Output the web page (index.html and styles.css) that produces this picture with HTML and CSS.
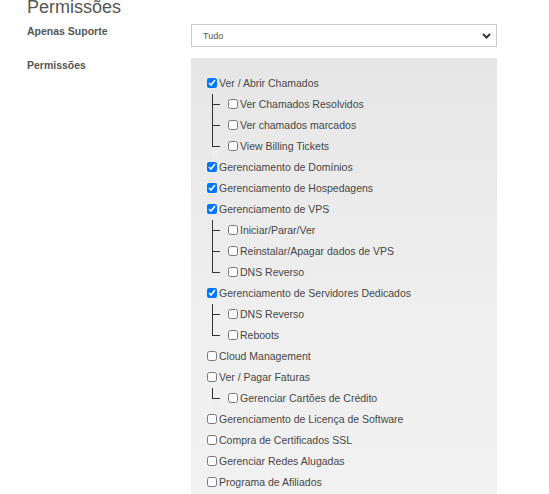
FILE: index.html
```html
<!DOCTYPE html>
<html lang="pt-BR">
<head>
<meta charset="utf-8">
<title>Permissões</title>
<link rel="stylesheet" href="styles.css">
</head>
<body>
<div class="page">
  <h1 class="title">Permissões</h1>

  <div class="form-row row-support">
    <label class="field-label" for="support">Apenas Suporte</label>
    <div class="select-wrap">
      <select id="support" class="select">
        <option>Tudo</option>
      </select>
      <svg class="chevron" width="9" height="6" viewBox="0 0 9 6" aria-hidden="true">
        <path d="M1 1 L4.5 4.5 L8 1" fill="none" stroke="#333" stroke-width="2"/>
      </svg>
    </div>
  </div>

  <div class="form-row row-perms">
    <div class="field-label perms-label">Permissões</div>
    <div class="perm-box">
      <ul class="tree">
        <li><label class="item"><input type="checkbox" checked> Ver / Abrir Chamados</label>
          <ul class="children">
            <li><label class="item"><input type="checkbox"> Ver Chamados Resolvidos</label></li>
            <li><label class="item"><input type="checkbox"> Ver chamados marcados</label></li>
            <li><label class="item"><input type="checkbox"> View Billing Tickets</label></li>
          </ul>
        </li>
        <li><label class="item"><input type="checkbox" checked> Gerenciamento de Domínios</label></li>
        <li><label class="item"><input type="checkbox" checked> Gerenciamento de Hospedagens</label></li>
        <li><label class="item"><input type="checkbox" checked> Gerenciamento de VPS</label>
          <ul class="children">
            <li><label class="item"><input type="checkbox"> Iniciar/Parar/Ver</label></li>
            <li><label class="item"><input type="checkbox"> Reinstalar/Apagar dados de VPS</label></li>
            <li><label class="item"><input type="checkbox"> DNS Reverso</label></li>
          </ul>
        </li>
        <li><label class="item"><input type="checkbox" checked> Gerenciamento de Servidores Dedicados</label>
          <ul class="children">
            <li><label class="item"><input type="checkbox"> DNS Reverso</label></li>
            <li><label class="item"><input type="checkbox"> Reboots</label></li>
          </ul>
        </li>
        <li><label class="item"><input type="checkbox"> Cloud Management</label></li>
        <li><label class="item"><input type="checkbox"> Ver / Pagar Faturas</label>
          <ul class="children">
            <li><label class="item"><input type="checkbox"> Gerenciar Cartões de Crédito</label></li>
          </ul>
        </li>
        <li><label class="item"><input type="checkbox"> Gerenciamento de Licença de Software</label></li>
        <li><label class="item"><input type="checkbox"> Compra de Certificados SSL</label></li>
        <li><label class="item"><input type="checkbox"> Gerenciar Redes Alugadas</label></li>
        <li><label class="item"><input type="checkbox"> Programa de Afiliados</label></li>
      </ul>
    </div>
  </div>
</div>
</body>
</html>
```

FILE: styles.css
```css
html, body {
  margin: 0;
  padding: 0;
  overflow: hidden;
  background: #fff;
}

body {
  font-family: "Liberation Sans", Arial, sans-serif;
  color: #4a4a4a;
}

.page {
  padding-left: 27px;
}

.title {
  margin: -2px 0 0;
  height: 18px;
  font-size: 18px;
  line-height: 18px;
  font-weight: normal;
  color: #555;
}

.form-row {
  display: grid;
  grid-template-columns: 164px 306px;
}

.row-support {
  margin-top: 8px;
}

.row-perms {
  margin-top: 11px;
}

.field-label {
  font-size: 10.5px;
  line-height: 14px;
  font-weight: bold;
  color: #555;
}

.perms-label {
  padding-top: 0;
}

.select-wrap {
  position: relative;
  height: 23px;
}

.select {
  appearance: none;
  -webkit-appearance: none;
  box-sizing: border-box;
  width: 100%;
  height: 23px;
  margin: 0;
  padding: 0 0 0 11px;
  border: 1px solid #cccccc;
  border-radius: 0;
  background: #fff;
  font-family: "Liberation Sans", Arial, sans-serif;
  font-size: 9px;
  color: #555;
  outline: none;
}

.chevron {
  position: absolute;
  right: 6px;
  top: 9px;
  pointer-events: none;
}

.perm-box {
  box-sizing: border-box;
  padding: 14.5px 0 20px 16px;
  background: linear-gradient(to bottom, #e6e6e6 0, #efefef 260px, #f1f1f1 440px);
}

.tree,
.children {
  list-style: none;
  margin: 0;
  padding: 0;
}

.children {
  margin-left: 5px;
  padding-left: 16px;
}

.children > li {
  position: relative;
}

.children > li::before {
  content: "";
  position: absolute;
  left: -16px;
  top: 0;
  height: 100%;
  border-left: 1px solid #333;
}

.children > li::after {
  content: "";
  position: absolute;
  left: -16px;
  top: 10px;
  width: 8px;
  border-top: 1px solid #333;
}

.children > li:last-child::before {
  height: 11px;
}

.children > li:last-child .item::before {
  content: "";
  position: absolute;
  left: -16px;
  top: 14px;
  width: 7px;
  height: 9px;
  background: #eeeeee;
}

.item {
  display: flex;
  align-items: center;
  height: 21px;
  font-size: 10.5px;
  line-height: 21px;
  color: #474747;
  white-space: nowrap;
}

.item input {
  width: 10px;
  height: 10px;
  margin: 0 2px 0 0;
  flex: none;
}
```
